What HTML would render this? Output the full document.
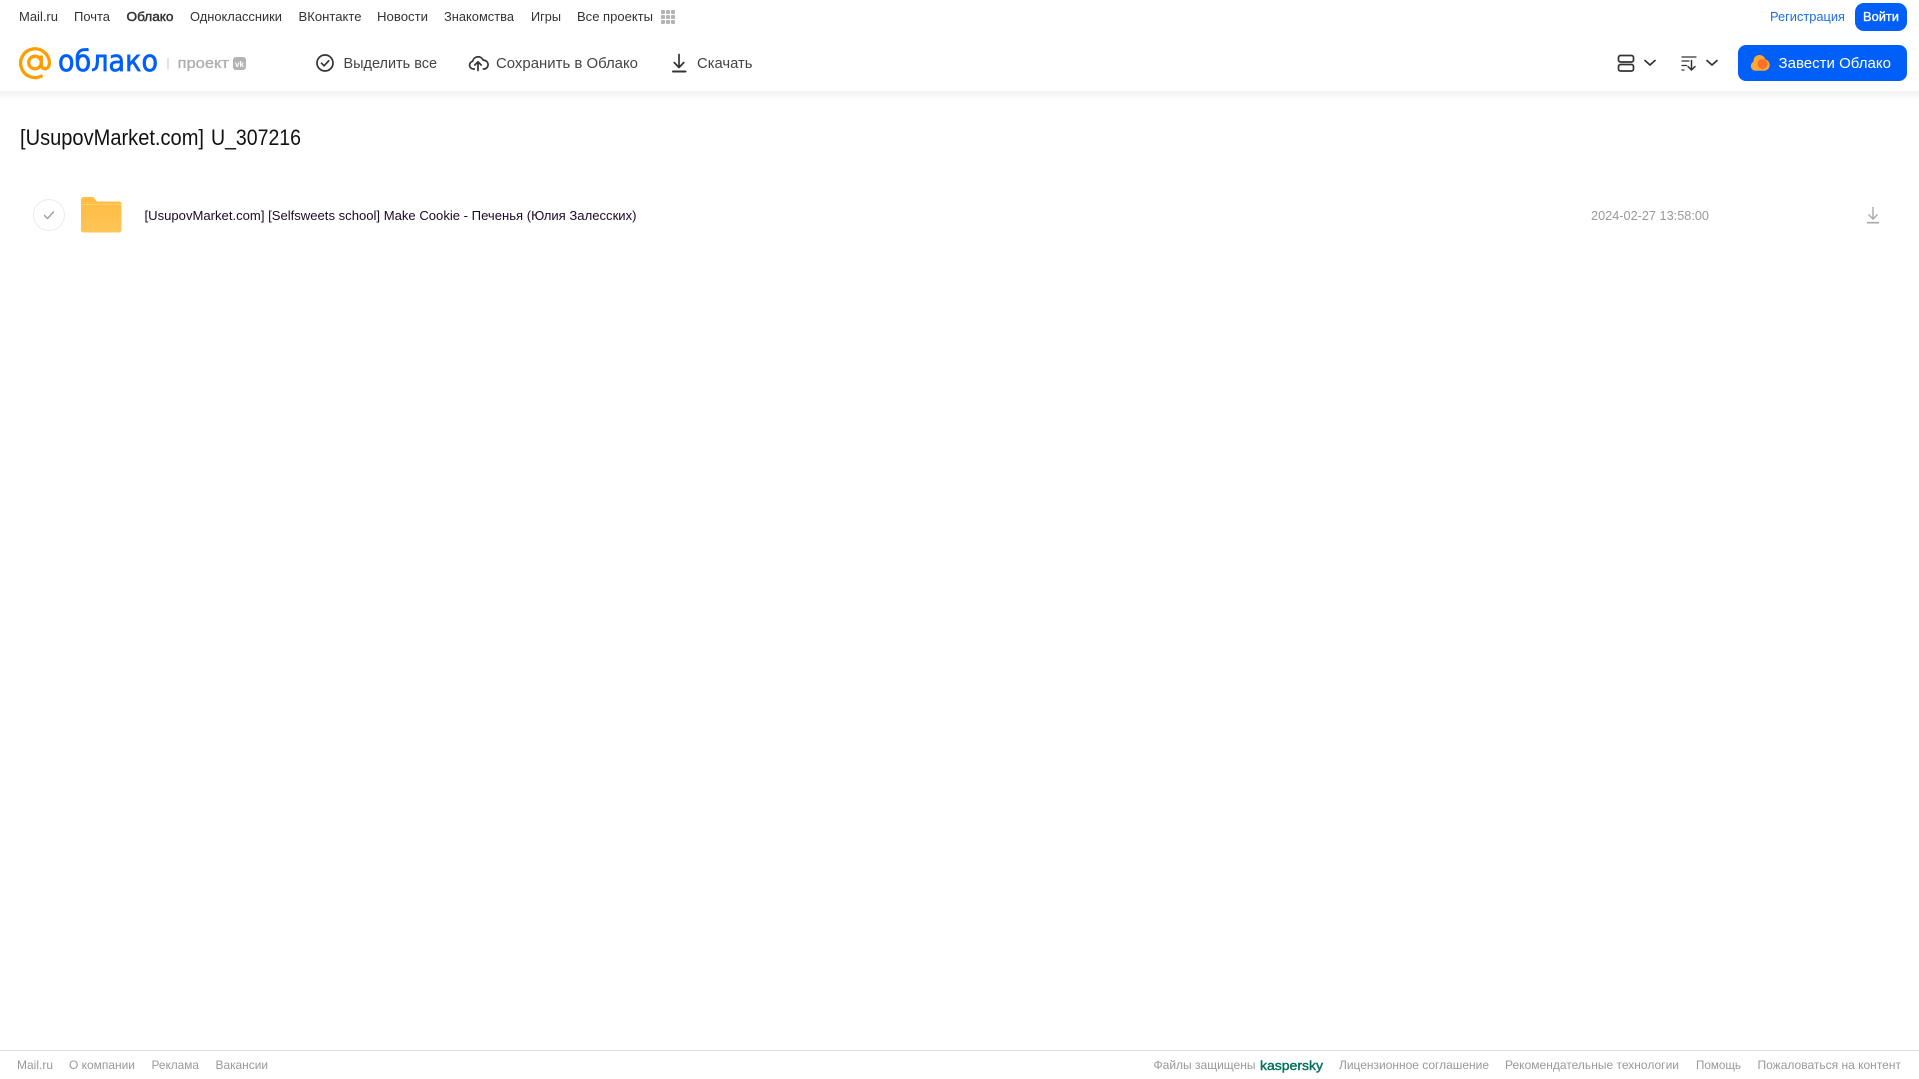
<!DOCTYPE html>
<html lang="ru"><head><meta charset="utf-8"><title>Облако</title>
<style>
html,body{margin:0;padding:0;background:#fff;width:1919px;height:1079px;overflow:hidden}
svg{display:block;position:absolute;left:0;top:0}
text{font-family:"Liberation Sans",Arial,sans-serif}
.n{font-size:13px;fill:#333}
.t{font-size:15px;fill:#444}
.f{font-size:12px;fill:#999}
</style></head><body>
<svg width="1919" height="1079" viewBox="0 0 1919 1079" xmlns="http://www.w3.org/2000/svg">
<defs>
<linearGradient id="sh" x1="0" y1="0" x2="0" y2="1"><stop offset="0" stop-color="#f3f3f3"/><stop offset="1" stop-color="#fff"/></linearGradient>
<linearGradient id="fo" x1="0" y1="0" x2="0" y2="1"><stop offset="0" stop-color="#ffbc40"/><stop offset="1" stop-color="#ffc558"/></linearGradient>
</defs>
<rect x="0" y="91" width="1919" height="10" fill="url(#sh)"/>

<!-- top nav -->
<text class="n" x="19" y="21" textLength="39" lengthAdjust="spacingAndGlyphs">Mail.ru</text>
<text class="n" x="74" y="21" textLength="36" lengthAdjust="spacingAndGlyphs">Почта</text>
<text class="n" x="126.500" y="21" textLength="47" lengthAdjust="spacingAndGlyphs" stroke="#333" stroke-width=".45">Облако</text>
<text class="n" x="190" y="21" textLength="92" lengthAdjust="spacingAndGlyphs">Одноклассники</text>
<text class="n" x="298.500" y="21" textLength="63" lengthAdjust="spacingAndGlyphs">ВКонтакте</text>
<text class="n" x="377" y="21" textLength="51" lengthAdjust="spacingAndGlyphs">Новости</text>
<text class="n" x="444" y="21" textLength="70" lengthAdjust="spacingAndGlyphs">Знакомства</text>
<text class="n" x="531" y="21" textLength="30" lengthAdjust="spacingAndGlyphs">Игры</text>
<text class="n" x="577" y="21" textLength="76" lengthAdjust="spacingAndGlyphs">Все проекты</text>
<g fill="#b3b3b3">
<rect x="661" y="10" width="4" height="4" rx="1"/><rect x="666" y="10" width="4" height="4" rx="1"/><rect x="671" y="10" width="4" height="4" rx="1"/>
<rect x="661" y="15" width="4" height="4" rx="1"/><rect x="666" y="15" width="4" height="4" rx="1"/><rect x="671" y="15" width="4" height="4" rx="1"/>
<rect x="661" y="20" width="4" height="4" rx="1"/><rect x="666" y="20" width="4" height="4" rx="1"/><rect x="671" y="20" width="4" height="4" rx="1"/>
</g>
<text x="1770" y="21" font-size="13" fill="#1a6fe8" textLength="75" lengthAdjust="spacingAndGlyphs">Регистрация</text>
<rect x="1855" y="3" width="52" height="28" rx="9" fill="#005ff9"/>
<text x="1863" y="21" font-size="13" fill="#fff" stroke="#fff" stroke-width=".35" textLength="36" lengthAdjust="spacingAndGlyphs">Войти</text>

<!-- logo -->
<g fill="none" stroke="#ff9e00" stroke-width="3.300">
<circle cx="35" cy="62.500" r="6.300"/>
<path d="M42.500 75.500A14.400 14.400 0 1 1 49.400 62.500c0 3.800-1.700 6.200-4.300 6.200s-3.800-2-3.800-4.700V55.500"/>
</g>
<text x="58" y="71" font-size="29" fill="#005ff9" stroke="#005ff9" stroke-width=".7" textLength="100" lengthAdjust="spacingAndGlyphs" style="font-family:'DejaVu Sans',sans-serif">облако</text>
<rect x="167.500" y="58" width="1" height="11" fill="#c4c4c4"/>
<text x="177.500" y="68" font-size="15" fill="#adadad" stroke="#adadad" stroke-width=".3" textLength="51.500" lengthAdjust="spacingAndGlyphs">проект</text>
<rect x="233" y="57" width="13" height="13" rx="3" fill="#b4b4b4"/>
<text x="235" y="67" font-size="8" font-weight="700" fill="#fff" textLength="9" lengthAdjust="spacingAndGlyphs">vk</text>

<!-- toolbar -->
<g fill="none" stroke="#333" stroke-width="1.700" stroke-linecap="round" stroke-linejoin="round">
<circle cx="325" cy="63" r="8"/>
<path d="M321.500 63.200l2.600 2.600 4.600-5"/>
<path d="M474.300 69h-.8a3.900 3.900 0 0 1-.9-7.700 5.600 5.600 0 0 1 10.700-1 3.900 3.900 0 0 1 .9 8.700h-.9"/>
<path d="M478 70.500v-8.500M474.800 65l3.200-3.200 3.200 3.200"/>
<path d="M679 54.500v12.500M674.200 62.500l4.800 5 4.800-5"/>
<path d="M673 71.500h12.500" stroke-width="2"/>
</g>
<text class="t" x="343.500" y="68" textLength="93.500" lengthAdjust="spacingAndGlyphs">Выделить все</text>
<text class="t" x="496" y="68" textLength="142" lengthAdjust="spacingAndGlyphs">Сохранить в Облако</text>
<text class="t" x="697" y="68" textLength="55.500" lengthAdjust="spacingAndGlyphs">Скачать</text>

<!-- right tools -->
<g fill="none" stroke="#333" stroke-width="1.700" stroke-linecap="round" stroke-linejoin="round">
<rect x="1618.500" y="55.500" width="15" height="6.500" rx="2"/>
<rect x="1618.500" y="64.500" width="15" height="6.500" rx="2"/>
<path d="M1645 60.500l5 4.500 5-4.500"/>
<path d="M1707 60.500l5 4.500 5-4.500"/>
<path d="M1691.500 60.500v9M1688 66.500l3.500 3.500 3.500-3.500" stroke-width="1.500"/>
<path d="M1682 57h14M1682 61h7M1682 65.500h4.500M1682 70h2" stroke-width="1.300"/>
</g>
<rect x="1738" y="45" width="169" height="36" rx="8" fill="#005ff9"/>
<g fill="#ffa930">
<circle cx="1755.500" cy="66" r="4.700"/>
<circle cx="1759.500" cy="61" r="6"/>
<circle cx="1764" cy="65" r="5.700"/>
<rect x="1755" y="64.500" width="10" height="6.200"/>
</g>
<circle cx="1762.500" cy="64" r="5" fill="#f9702a"/>
<text x="1778.500" y="68" font-size="15" fill="#fff" textLength="112.500" lengthAdjust="spacingAndGlyphs">Завести Облако</text>

<!-- title -->
<text x="20" y="145" font-size="22" fill="#111" textLength="184" lengthAdjust="spacingAndGlyphs">[UsupovMarket.com]</text>
<text x="211" y="145" font-size="22" fill="#111" textLength="90" lengthAdjust="spacingAndGlyphs">U_307216</text>

<!-- row -->
<circle cx="49" cy="215" r="15.500" fill="#fff" stroke="#ececec" stroke-width="1"/>
<path d="M44.500 215.500l3 3 6-6.500" fill="none" stroke="#999" stroke-width="1.300" stroke-linecap="round" stroke-linejoin="round"/>
<path d="M81 200a3 3 0 0 1 3-3h7c2 0 3 .8 4 2l2 2.500H119a2.500 2.500 0 0 1 2.500 2.500v26a2.500 2.500 0 0 1-2.500 2.500H83.500a2.500 2.500 0 0 1-2.500-2.500z" fill="url(#fo)"/>
<rect x="81" y="204" width="40.500" height="1" fill="#ffcf70"/>
<text x="144.500" y="220" font-size="13" fill="#1a0a2a" textLength="492" lengthAdjust="spacingAndGlyphs">[UsupovMarket.com] [Selfsweets school] Make Cookie - Печенья (Юлия Залесских)</text>
<text x="1591" y="220" font-size="13" fill="#999" textLength="118" lengthAdjust="spacingAndGlyphs">2024-02-27 13:58:00</text>
<g fill="none" stroke="#a8a8a8" stroke-width="1.400">
<path d="M1873 207v12M1868.500 214.500l4.500 4.500 4.500-4.500"/>
<path d="M1867 222.700h12" stroke-width="1.600"/>
</g>

<!-- footer -->
<rect x="0" y="1050" width="1919" height="1" fill="#dcdcdc"/>
<text class="f" x="17" y="1069" textLength="36" lengthAdjust="spacingAndGlyphs">Mail.ru</text>
<text class="f" x="69" y="1069" textLength="66" lengthAdjust="spacingAndGlyphs">О компании</text>
<text class="f" x="151.500" y="1069" textLength="47.500" lengthAdjust="spacingAndGlyphs">Реклама</text>
<text class="f" x="215.500" y="1069" textLength="52.500" lengthAdjust="spacingAndGlyphs">Вакансии</text>
<text class="f" x="1153.500" y="1069" textLength="102" lengthAdjust="spacingAndGlyphs">Файлы защищены</text>
<text x="1260" y="1070" font-size="13" fill="#00705a" stroke="#00705a" stroke-width=".4" textLength="63" lengthAdjust="spacingAndGlyphs">kaspersky</text>
<text class="f" x="1339" y="1069" textLength="150" lengthAdjust="spacingAndGlyphs">Лицензионное соглашение</text>
<text class="f" x="1505" y="1069" textLength="174" lengthAdjust="spacingAndGlyphs">Рекомендательные технологии</text>
<text class="f" x="1696" y="1069" textLength="45" lengthAdjust="spacingAndGlyphs">Помощь</text>
<text class="f" x="1757.500" y="1069" textLength="143.500" lengthAdjust="spacingAndGlyphs">Пожаловаться на контент</text>
</svg>
</body></html>
